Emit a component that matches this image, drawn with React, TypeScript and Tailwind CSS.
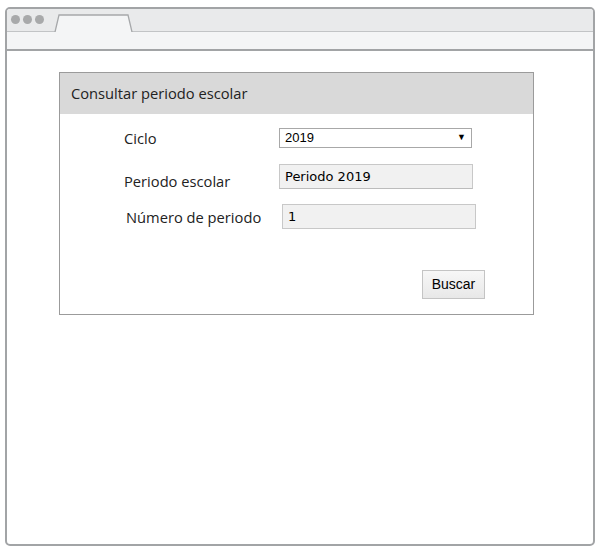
import React from "react";

export default function App() {
  return (
    <div className="w-[606px] h-[554px] bg-white relative" style={{ fontFamily: '"Open Sans", sans-serif' }}>
      <div className="absolute left-[5px] top-[7px] w-[590px] h-[539px] border-2 border-[#a2a4a6] rounded-[5px] overflow-hidden flex flex-col bg-white">
        {/* title bar */}
        <div className="h-[22px] bg-[#e9eaeb] flex items-end relative shrink-0">
          <div className="flex gap-[3px] absolute left-[4px] top-[6px]">
            <div className="w-[9px] h-[9px] rounded-full bg-[#a8a9aa]" />
            <div className="w-[9px] h-[9px] rounded-full bg-[#a8a9aa]" />
            <div className="w-[9px] h-[9px] rounded-full bg-[#a8a9aa]" />
          </div>
          <svg className="absolute left-[47px] top-[5px]" width="82" height="18" viewBox="0 0 82 18">
            <path d="M1 18 L5 1 L74 1 L78 18" fill="#f4f5f6" stroke="#a6a8aa" strokeWidth="1.3" />
          </svg>
        </div>
        <div className="h-[20px] bg-[#f4f5f6] border-t border-[#c2c4c6] border-b-2 border-b-[#a2a4a6] shrink-0" />
        {/* page */}
        <div className="flex-1">
          <div className="ml-[52px] mt-[21px] w-[475px] border border-[#9b9b9b] flex flex-col">
            <div className="h-[41px] bg-[#d9d9d9] flex items-center pl-[11px] text-[14.7px] text-[#222]">
              Consultar periodo escolar
            </div>
            <div className="flex flex-col">
              <div className="flex items-center mt-[14px] h-[20px]">
                <div className="w-[219px] pl-[64px] text-[14.7px] text-[#222]">Ciclo</div>
                <div className="w-[193px] h-[20px] border border-[#a8a8a8] flex items-center justify-between px-[5px]" style={{ fontFamily: '"Liberation Sans", sans-serif' }}>
                  <span className="text-[13px] text-black">2019</span>
                  <span className="text-[9px] text-black">▼</span>
                </div>
              </div>
              <div className="flex mt-[16px] h-[25px]">
                <div className="w-[219px] pl-[64px] text-[14.7px] text-[#222] pt-[6px]">Periodo escolar</div>
                <div className="w-[194px] h-[25px] bg-[#f1f1f1] border border-[#c8c8c8] border-b-[#bcbcbc] flex items-center px-[5px] text-[13px] text-black" style={{ fontFamily: '"DejaVu Sans", sans-serif' }}>
                  Periodo 2019
                </div>
              </div>
              <div className="flex mt-[15px] h-[25px]">
                <div className="w-[222px] pl-[66px] text-[14.7px] text-[#222] pt-[2px]">Número de periodo</div>
                <div className="w-[194px] h-[25px] bg-[#f1f1f1] border border-[#c8c8c8] flex items-center px-[5px] text-[13px] text-black" style={{ fontFamily: '"DejaVu Sans", sans-serif' }}>
                  1
                </div>
              </div>
              <div className="flex justify-end mt-[41px] mb-[15px] pr-[48px]">
                <div className="w-[63px] h-[29px] border border-[#c4c4c4] bg-gradient-to-b from-[#f7f7f7] to-[#e8e8e8] flex items-center justify-center text-[14px] text-black" style={{ fontFamily: '"Liberation Sans", sans-serif' }}>
                  Buscar
                </div>
              </div>
            </div>
          </div>
        </div>
      </div>
    </div>
  );
}
